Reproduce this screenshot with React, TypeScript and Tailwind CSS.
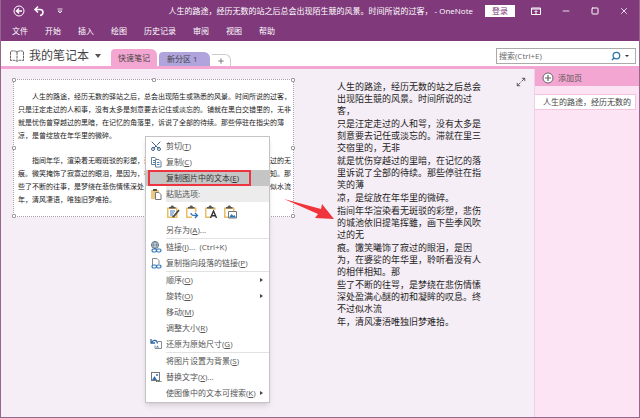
import { useState, type ReactNode } from "react";
import { Maximize2, Minus, Plus, Scissors, Search, Square, X } from "lucide-react";

const RIBBON_TABS = ["文件", "开始", "插入", "绘图", "历史记录", "审阅", "视图", "帮助"];

const SCAN_PARAGRAPHS = [
  [
    "人生的路途，经历无数的驿站之后，总会出现陌生或熟悉的风景。时间所说的过客，",
    "只是汪定走过的人和事，没有太多是刻意要去记住或淡忘的。铺就在黑白交错里的，无非",
    "就是忧伤曾穿越过的黑暗，在记忆的角落里，诉说了全部的待续。那些停驻在指尖的薄",
    "凉，是曾绽放在年华里的微碎。",
  ],
  [
    "指间年华，渲染着无暇斑驳的彩塑，悲伤的城池依旧提笔挥毫，画下些季风吹过的无",
    "痕。微笑掩饰了寂寞过的眼泪，是因为，在婆娑的年华里，聆听着没有人的相伴相知。那",
    "些了不断的往事，是梦绕在悲伤情愫深处，盈满心酸的初和凝眸的叹息。终究不过似水流",
    "年，清风凄语，唯独旧梦难拾。",
  ],
];

const NOTE_PARAGRAPHS = [
  ["人生的路途，经历无数的站之后总会", "出现陌生競的风景。时间所说的过", "客，"],
  ["只是汪定走过的人和咢，没有太多是", "刻意要去记任或淡忘的。滞就在里三", "交宿里的，无非"],
  ["就是忧伤穿越过的里暗，在记忆的落", "里诉说了全部的待续。那些停驻在指", "笑的薄"],
  ["凉，是绽放在年华里的微碎。"],
  ["指间年华渲染看无斑驳的彩塑，悲伤", "的城池依旧提笔挥雖，画下些季风吹", "过的无"],
  ["痕。馓笑曦饰了寂过的眼泪，是因", "为，在婆娑的年华里，聆听看没有人", "的相伴相知。那"],
  ["些了不断的往咢，是梦绕在悲伤情愫", "深处盈满心醚的初和凝眸的叹息。终", "不过似水流"],
  ["年，清风凄浯唯独旧梦难拾。"],
];

function CopyIcon() {
  return (
    <svg viewBox="0 0 12 12" className="size-3" fill="#fff" stroke="#6b7f96">
      <path d="M1.5 1.5h3.5l1.5 1.5v5.5h-5z" />
      <path d="M3 4.5h2M3 6.5h2" stroke="#3f7fb8" />
      <path d="M5.500 3.500h3.500l2 2v5.500h-5.500z" />
      <path d="M7 6.500h2.500M7 8.500h2.500" stroke="#3f7fb8" />
    </svg>
  );
}

function PasteIcon() {
  return (
    <svg viewBox="0 0 12 12" className="size-3">
      <path d="M1 2h8v9H1z" fill="#ecc981" />
      <path d="M3 1h4v2H3z" fill="#555" />
      <path d="M5.500 4.500h3.500l2 2v5h-5.500z" fill="#fff" stroke="#777" />
    </svg>
  );
}

function LinkIcon({ page }: { page?: boolean }) {
  return (
    <svg viewBox="0 0 12 12" className="size-3" fill="none">
      {page ? (
        <path d="M2.500 9V1.500h4.500l2 2V7" stroke="#8a8a8a" />
      ) : (
        <>
          <circle cx="5" cy="4" r="3.500" fill="#d5e3ee" stroke="#5c6b78" />
          <path d="M1.500 4h7M5 .5c-2 2-2 5 0 7M5 .5c2 2 2 5 0 7" stroke="#5c6b78" strokeWidth=".7" />
        </>
      )}
      <rect x="2" y="8" width="4.500" height="3" rx="1.500" stroke="#2f75b5" strokeWidth="1.200" />
      <rect x="6.500" y="8" width="4.500" height="3" rx="1.500" stroke="#2f75b5" strokeWidth="1.200" />
    </svg>
  );
}

function RestoreIcon() {
  return (
    <svg viewBox="0 0 12 12" className="size-3" fill="none">
      <path d="M1 1v4h4M1.500 4.500C3 1.500 7 1.500 7.500 5.500" stroke="#2f66a5" strokeWidth="1.300" />
      <path d="M8 3.500h3.500v7H5V7.500" stroke="#8a8a8a" />
      <path d="M6 9.500l1.500-2 1.500 2z" fill="#3f7fb8" />
    </svg>
  );
}

function PictureIcon() {
  return (
    <svg viewBox="0 0 12 12" className="size-3" fill="none">
      <rect x="1.500" y="1.500" width="8" height="8" fill="#fff" stroke="#777" />
      <path d="M2 9l2.500-4L7 9z" fill="#2f75b5" />
      <circle cx="7" cy="4" r="1" fill="#2f75b5" />
      <path d="M6 10.500h5.500" stroke="#555" strokeDasharray="1.500 .7" />
    </svg>
  );
}

function ClipboardIcon({ children }: { children: ReactNode }) {
  return (
    <svg viewBox="0 0 14 14" className="size-3.5" fill="none">
      <path d="M1 2.500h10.500v10.500H1z" fill="#e9bd62" />
      <path d="M2.500 4h7.500v7.500H2.500z" fill="#fff" />
      <path d="M3 3.500V2h1.500a1.800 1.800 0 0 1 3.500 0h1.500v1.500z" fill="#555" />
      {children}
    </svg>
  );
}

function MenuItem({
  label,
  hotkey,
  suffix,
  icon,
  submenu,
  active,
}: {
  label: string;
  hotkey: string;
  suffix?: string;
  icon?: ReactNode;
  submenu?: boolean;
  active?: boolean;
}) {
  return (
    <button
      type="button"
      role="menuitem"
      className={`flex h-4 w-full items-center whitespace-nowrap text-left hover:bg-[#c5c5c5] ${
        active ? "bg-[#c5c5c5] text-[#333]" : ""
      }`}
    >
      <span className="flex w-5 shrink-0 justify-center">{icon}</span>
      <span className="flex-1 whitespace-pre">
        {label}(<u>{hotkey}</u>){suffix}
      </span>
      {submenu && <span className="mr-1.5 border-y-2 border-l-3 border-y-transparent border-l-[#444]" />}
    </button>
  );
}

function Separator() {
  return <div role="separator" className="ml-5 h-px bg-[#e2e2e2]" />;
}

function ContextMenu() {
  return (
    <div
      role="menu"
      className="absolute left-[144px] top-[67px] w-[125px] border border-[#c6c3c6] bg-white py-px text-[8px] leading-4 text-[#555] shadow-md"
    >
      <MenuItem label="剪切" hotkey="T" icon={<Scissors className="size-3 -rotate-90 text-[#3d6488]" />} />
      <MenuItem label="复制" hotkey="C" icon={<CopyIcon />} />
      <div className="relative">
        <MenuItem label="复制图片中的文本" hotkey="E" active />
        <span className="pointer-events-none absolute inset-y-0 left-0.5 right-[18px] border-2 border-[#ec3540]" />
      </div>
      <div className="flex h-4 items-center">
        <span className="flex w-5 justify-center">
          <PasteIcon />
        </span>
        <span className="flex-1 bg-[#ececec]">粘贴选项:</span>
      </div>
      <div className="flex h-5 items-center gap-[5px] pl-5">
        <button type="button" aria-label="保留源格式">
          <ClipboardIcon>
            <path d="M4 6h5M4 8h4M4 10h3" stroke="#3f7fb8" />
            <path d="M13 5l-5 6-1.500 1" stroke="#4a4a4a" strokeWidth="1.800" />
          </ClipboardIcon>
        </button>
        <button type="button" aria-label="合并格式">
          <ClipboardIcon>
            <path d="M7 7h6v6H7z" fill="#fff" />
            <path d="M6 8c0 2 2 3 6 2.500M10 8l2.500 2.500L10 13" stroke="#2f75b5" strokeWidth="1.300" />
          </ClipboardIcon>
        </button>
        <button type="button" aria-label="只保留文本">
          <ClipboardIcon>
            <path d="M6 5h7v8H6z" fill="#fff" />
            <path d="M6.500 13L9.500 6l3 7M7.500 10.800h4" stroke="#333" strokeWidth="1.400" />
          </ClipboardIcon>
        </button>
        <button type="button" aria-label="图片">
          <ClipboardIcon>
            <path d="M5.500 6.500h8v6.500h-8z" fill="#fff" stroke="#777" />
            <path d="M6 12.500l2.500-3.500 2 2 1-1 1.500 2.500z" fill="#2f75b5" />
          </ClipboardIcon>
        </button>
      </div>
      <MenuItem label="另存为" hotkey="A" suffix="..." />
      <Separator />
      <MenuItem label="链接" hotkey="I" suffix="...  (Ctrl+K)" icon={<LinkIcon />} />
      <MenuItem label="复制指向段落的链接" hotkey="P" icon={<LinkIcon page />} />
      <Separator />
      <MenuItem label="顺序" hotkey="O" submenu />
      <MenuItem label="旋转" hotkey="O" submenu />
      <MenuItem label="移动" hotkey="M" />
      <MenuItem label="调整大小" hotkey="R" />
      <MenuItem label="还原为原始尺寸" hotkey="G" icon={<RestoreIcon />} />
      <Separator />
      <MenuItem label="将图片设置为背景" hotkey="S" />
      <MenuItem label="替换文字" hotkey="X" suffix="..." icon={<PictureIcon />} />
      <MenuItem label="使图像中的文本可搜索" hotkey="K" submenu />
    </div>
  );
}

function TitleBar() {
  return (
    <header className="bg-[#80397b] text-[8px] text-white">
      <div className="flex h-[21px] items-center pl-3 pr-2.5">
        <div className="flex items-center gap-2">
          <button type="button" aria-label="返回">
            <svg viewBox="0 0 12 12" className="size-3" fill="none" stroke="currentColor">
              <circle cx="6" cy="6" r="5" />
              <path d="M9 6H3.500M6 3.500L3.500 6L6 8.500" strokeWidth="1.400" />
            </svg>
          </button>
          <button type="button" aria-label="撤消">
            <svg viewBox="0 0 12 12" className="size-3" fill="none" stroke="currentColor" strokeWidth="1.500">
              <path d="M5 1.500L2 4.500l3 3M2 4.500h5c4 0 4 5.500 0 6" />
            </svg>
          </button>
          <button type="button" aria-label="自定义快速访问工具栏" className="pl-1">
            <svg viewBox="0 0 6 6" className="size-1.5" fill="none" stroke="currentColor" strokeWidth=".8">
              <path d="M.5 1h5M1 3h4L3 5z" />
            </svg>
          </button>
        </div>
        <h1 className="flex-1 whitespace-pre pr-3 text-right">
          人生的路途，经历无数的站之后总会出现陌生競的风景。时间所说的过客， - OneNote
        </h1>
        <button type="button" className="flex h-3 w-[30px] items-center justify-center bg-white text-[#80397b]">
          登录
        </button>
        <div className="flex items-center gap-5 pl-4">
          <button type="button" aria-label="功能区显示选项">
            <svg viewBox="0 0 10 8" className="h-2 w-2.5" fill="none" stroke="currentColor">
              <path d="M.5 1h9v6.500h-9zM.5 2h9M5 7V4M3.500 5L5 3.500L6.500 5" />
            </svg>
          </button>
          <button type="button" aria-label="最小化">
            <Minus className="size-2.5" />
          </button>
          <button type="button" aria-label="最大化">
            <Square className="size-2" strokeWidth={3} />
          </button>
          <button type="button" aria-label="关闭">
            <X className="size-2.5" />
          </button>
        </div>
      </div>
      <nav className="flex h-5 items-center gap-[17px] pl-[11px]">
        {RIBBON_TABS.map((tab) => (
          <button type="button" key={tab}>
            {tab}
          </button>
        ))}
      </nav>
    </header>
  );
}

function NotebookBar() {
  const [query, setQuery] = useState("");

  return (
    <div className="flex h-7 items-end border-b-3 border-[#f4a6d2] bg-white pl-2 pr-[3px] text-[8px] text-[#444]">
      <button type="button" className="flex items-center self-end pb-px text-[12px]">
        <svg viewBox="0 0 16 12" className="mr-1 h-3 w-4" fill="none" stroke="#666">
          <path
            d="M8 2v9M8 2C6 .5 3 .5 1.500 1.500V10.500C4 10 6 10 8 11.500M8 2c2-1.500 5-1.500 6.500-.5V10.500C12 10 10 10 8 11.500"
            strokeDasharray="3 .6"
          />
        </svg>
        我的笔记本
        <span className="ml-1.5 border-x-3 border-t-4 border-x-transparent border-t-[#555]" />
      </button>
      <div className="ml-2.5 flex items-end gap-0.5">
        <button type="button" className="h-[17px] rounded-t-sm rounded-tr-md bg-[#f4a6d2] px-[7px]">
          快速笔记
        </button>
        <button type="button" className="h-3.5 rounded-t-sm rounded-tr-md bg-[#b0a4dc] pl-2 pr-3">
          新分区 1
        </button>
        <button
          type="button"
          aria-label="创建新分区"
          className="flex h-3 w-[19px] items-center justify-center rounded-tr-md border-r border-t border-[#ccc]"
        >
          <Plus className="size-2" />
        </button>
      </div>
      <label className="mb-0.5 ml-auto flex h-4 w-[140px] items-center border border-[#aaa] bg-white px-0.5">
        <input
          type="text"
          aria-label="搜索"
          placeholder="搜索(Ctrl+E)"
          value={query}
          onChange={(e) => setQuery(e.target.value)}
          className="min-w-0 flex-1 outline-none placeholder:text-[#666]"
        />
        <Search className="size-2.5 -scale-x-100 text-[#2f75a5]" strokeWidth={3} />
        <span className="mx-1 border-x-2 border-t-2 border-x-transparent border-t-[#333]" />
      </label>
    </div>
  );
}

const HANDLES = [
  "-left-0.5 -top-0.5",
  "left-1/2 -ml-0.5 -top-0.5",
  "-right-0.5 -top-0.5",
  "-left-0.5 top-1/2 -mt-0.5",
  "-right-0.5 top-1/2 -mt-0.5",
  "-left-0.5 -bottom-0.5",
  "left-1/2 -ml-0.5 -bottom-0.5",
  "-right-0.5 -bottom-0.5",
];

function ScannedImage() {
  return (
    <figure className="relative flex w-[281px] shrink-0 flex-col gap-3 self-start border border-dotted border-[#a9a3a9] bg-white px-1 py-2.5 text-[7px] leading-[13px] text-[#222]">
      {SCAN_PARAGRAPHS.map((lines, i) => (
        <p key={i} className="whitespace-nowrap indent-3.5">
          {lines.map((line) => (
            <span key={line}>
              {line}
              <br />
            </span>
          ))}
        </p>
      ))}
      {HANDLES.map((position) => (
        <span key={position} className={`absolute size-1 rounded-[1px] border border-[#999] bg-white ${position}`} />
      ))}
    </figure>
  );
}

export default function App() {
  return (
    <div className="flex min-h-screen flex-col border-x border-b border-[#96668f] bg-[#f6eef6] font-['Open_Sans','Noto_Sans_CJK_SC',sans-serif]">
      <TitleBar />
      <NotebookBar />
      <div className="flex flex-1">
        <main className="relative flex flex-1 pl-3 pt-2.5">
          <ScannedImage />
          <article className="ml-[43px] flex flex-1 flex-col gap-px pt-0.5 text-[9px] leading-3 text-[#222]">
            {NOTE_PARAGRAPHS.map((lines, i) => (
              <p key={i} className="whitespace-nowrap">
                {lines.map((line) => (
                  <span key={line}>
                    {line}
                    <br />
                  </span>
                ))}
              </p>
            ))}
          </article>
          <button type="button" aria-label="全页视图" className="absolute right-2 top-2">
            <Maximize2 className="size-2.5 text-[#444]" />
          </button>
          <ContextMenu />
          <svg viewBox="0 0 50 24" className="pointer-events-none absolute left-[283px] top-[129px] h-6 w-[50px]">
            <path d="M0 1L37 11L38 6L50 21L31 20L34 16Z" fill="#f0343c" />
          </svg>
        </main>
        <aside className="w-[105px] shrink-0 border-l border-[#f0d0e6] bg-[#fce4f4] text-[8px] text-[#555]">
          <button type="button" className="flex h-[17px] w-full items-center gap-1 bg-[#f4a6d2] pl-[7px]">
            <svg viewBox="0 0 12 12" className="size-3" fill="#fff" stroke="#666">
              <circle cx="6" cy="6" r="5" />
              <path d="M6 3v6M3 6h6" strokeWidth="1.200" />
            </svg>
            添加页
          </button>
          <a
            href="#page"
            className="mr-[3px] mt-2 block h-4 overflow-hidden whitespace-nowrap border border-l-0 border-[#f2c4e0] bg-white pl-2 leading-[14px] text-[#444]"
          >
            人生的路途，经历无数的
          </a>
        </aside>
      </div>
    </div>
  );
}
